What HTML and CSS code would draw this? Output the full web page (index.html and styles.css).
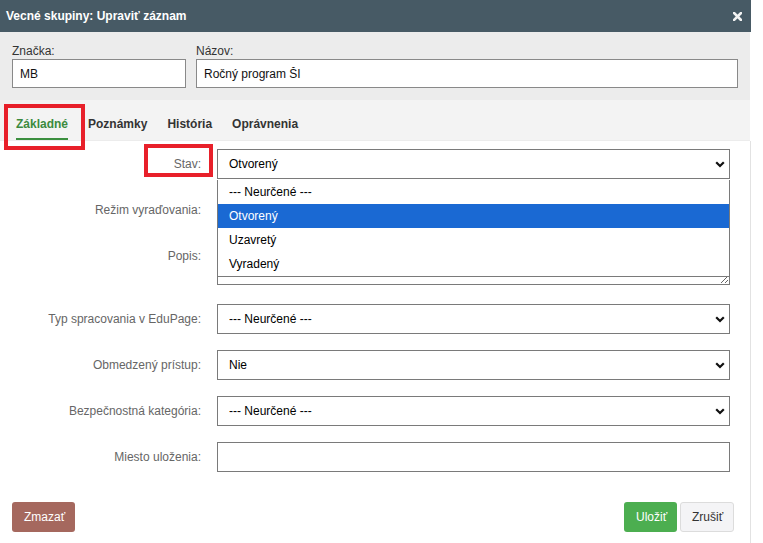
FILE: index.html
```html
<!DOCTYPE html>
<html>

<head>
    <meta charset="utf-8">
    <title>Vecné skupiny: Upraviť záznam</title>
    <link rel="stylesheet" href="styles.css">
</head>

<body>
    <div class="dialog">
        <div class="dialog-header">
            <span class="dialog-title">Vecné skupiny: Upraviť záznam</span>
            <span class="close-btn">
                <svg width="9" height="9" viewBox="0 0 9 9">
                    <path d="M1 1 L8 8 M8 1 L1 8" stroke="#f2f2f2" stroke-width="2.6" stroke-linecap="square" fill="none"/>
                </svg>
            </span>
        </div>

        <div class="head-fields">
            <div class="head-field field-code">
                <label for="code">Značka:</label>
                <input type="text" id="code" value="MB">
            </div>
            <div class="head-field field-name">
                <label for="name">Názov:</label>
                <input type="text" id="name" value="Ročný program ŠI">
            </div>
        </div>

        <div class="tabs">
            <div class="tab active">Základné</div>
            <div class="tab">Poznámky</div>
            <div class="tab">História</div>
            <div class="tab">Oprávnenia</div>
        </div>

        <div class="dialog-body">
            <div class="form-row">
                <label>Stav:</label>
                <div class="select-wrap">
                    <select class="select">
                        <option>Otvorený</option>
                    </select>
                    <svg class="chevron" width="10" height="7" viewBox="0 0 10 7">
                        <path d="M1.2 1.2 L5 5 L8.8 1.2" stroke="#111" stroke-width="2.2" fill="none"/>
                    </svg>
                    <ul class="dropdown">
                        <li>--- Neurčené ---</li>
                        <li class="selected">Otvorený</li>
                        <li>Uzavretý</li>
                        <li>Vyradený</li>
                    </ul>
                </div>
            </div>

            <div class="form-row">
                <label>Režim vyraďovania:</label>
                <div class="select-wrap">
                    <select class="select">
                        <option>--- Neurčené ---</option>
                    </select>
                </div>
            </div>

            <div class="form-row row-text">
                <label>Popis:</label>
                <textarea class="textarea"></textarea>
            </div>

            <div class="form-row">
                <label>Typ spracovania v EduPage:</label>
                <div class="select-wrap">
                    <select class="select">
                        <option>--- Neurčené ---</option>
                    </select>
                    <svg class="chevron" width="10" height="7" viewBox="0 0 10 7">
                        <path d="M1.2 1.2 L5 5 L8.8 1.2" stroke="#111" stroke-width="2.2" fill="none"/>
                    </svg>
                </div>
            </div>

            <div class="form-row">
                <label>Obmedzený prístup:</label>
                <div class="select-wrap">
                    <select class="select">
                        <option>Nie</option>
                    </select>
                    <svg class="chevron" width="10" height="7" viewBox="0 0 10 7">
                        <path d="M1.2 1.2 L5 5 L8.8 1.2" stroke="#111" stroke-width="2.2" fill="none"/>
                    </svg>
                </div>
            </div>

            <div class="form-row">
                <label>Bezpečnostná kategória:</label>
                <div class="select-wrap">
                    <select class="select">
                        <option>--- Neurčené ---</option>
                    </select>
                    <svg class="chevron" width="10" height="7" viewBox="0 0 10 7">
                        <path d="M1.2 1.2 L5 5 L8.8 1.2" stroke="#111" stroke-width="2.2" fill="none"/>
                    </svg>
                </div>
            </div>

            <div class="form-row">
                <label>Miesto uloženia:</label>
                <input type="text" class="text-input">
            </div>

            <div class="buttons">
                <button type="button" class="delete-btn">Zmazať</button>
                <div class="buttons-right">
                    <button type="button" class="save-btn">Uložiť</button>
                    <button type="button" class="cancel-btn">Zrušiť</button>
                </div>
            </div>
        </div>

        <!-- označenia -->
        <div class="mark mark-tab"></div>
        <div class="mark mark-stav"></div>
    </div>
</body>

</html>
```

FILE: styles.css
```css
body {
    margin: 0;
    font-family: "Liberation Sans", Arial, sans-serif;
    font-size: 12px;
    background-color: white;
}

.dialog {
    position: relative;
    width: 751px;
    height: 543px;
    overflow: hidden;
}

.dialog-header {
    height: 32px;
    background-color: #475a65;
    display: flex;
    align-items: center;
    justify-content: space-between;
    padding: 0 9px 0 6px;
}

.dialog-title {
    color: white;
    font-weight: bold;
    font-size: 12px;
}

.close-btn {
    display: flex;
    margin-top: 1px;
}

.head-fields {
    display: flex;
    gap: 10px;
    width: 750px;
    box-sizing: border-box;
    padding: 11px 12px 12px;
    background-color: #ececec;
}

.head-field label {
    display: block;
    line-height: 16px;
    color: #333;
}

.head-field input {
    display: block;
    height: 29px;
    box-sizing: border-box;
    border: 1px solid #898989;
    padding: 0 7px;
    font-family: inherit;
    font-size: 12px;
    color: #111;
}

.field-code input {
    width: 174px;
}

.field-name input {
    width: 542px;
}

.tabs {
    display: flex;
    gap: 20px;
    width: 750px;
    box-sizing: border-box;
    padding-left: 16px;
    background-color: #f3f3f3;
    border-bottom: 1px solid #ececec;
}

.tab {
    padding-top: 16px;
    padding-bottom: 6px;
    line-height: 16px;
    font-weight: bold;
    color: #333;
    border-bottom: 2px solid transparent;
}

.tab.active {
    color: #3b8a3e;
    border-bottom-color: #3b8f3f;
}

.dialog-body {
    width: 751px;
    height: 402px;
    box-sizing: border-box;
    padding: 8px 16px 0 12px;
    border-right: 1px solid #e2e2e2;
}

.form-row {
    display: grid;
    grid-template-columns: 189px 513px;
    column-gap: 16px;
    margin-bottom: 16px;
}

.form-row label {
    line-height: 30px;
    text-align: right;
    color: #666;
}

.row-text {
    margin-bottom: 19px;
}

.select-wrap {
    position: relative;
}

.select {
    display: block;
    width: 513px;
    height: 30px;
    box-sizing: border-box;
    border: 1px solid #7a7a7a;
    border-radius: 0;
    padding: 0 11px;
    background-color: white;
    font-family: inherit;
    font-size: 12px;
    color: #000;
    appearance: none;
    -webkit-appearance: none;
}

.chevron {
    position: absolute;
    right: 5px;
    top: 12px;
}

.dropdown {
    position: absolute;
    top: 31px;
    left: 0;
    width: 513px;
    box-sizing: border-box;
    margin: 0;
    padding: 0;
    list-style: none;
    background-color: white;
    border: 1px solid #7a7a7a;
    border-top: none;
    z-index: 5;
}

.dropdown li {
    height: 24px;
    line-height: 24px;
    padding-left: 11px;
    color: #000;
}

.dropdown li.selected {
    background-color: #1a69d3;
    color: white;
}

.textarea {
    display: block;
    width: 513px;
    height: 44px;
    box-sizing: border-box;
    border: 1px solid #7a7a7a;
    margin: 0;
    font-family: inherit;
    font-size: 12px;
}

.text-input {
    display: block;
    width: 513px;
    height: 30px;
    box-sizing: border-box;
    border: 1px solid #7a7a7a;
    padding: 0 11px;
    font-family: inherit;
}

.buttons {
    display: flex;
    justify-content: space-between;
    margin-top: 30px;
}

.buttons-right {
    display: flex;
    gap: 3px;
}

button {
    height: 30px;
    padding: 0 11px;
    border: 1px solid transparent;
    border-radius: 3px;
    font-family: inherit;
    font-size: 12px;
    cursor: pointer;
}

.delete-btn {
    width: 63px;
    background-color: #a5685e;
    color: white;
}

.save-btn {
    width: 53px;
    background-color: #4cae50;
    color: white;
}

.cancel-btn {
    width: 54px;
    background-color: #f4f4f6;
    border-color: #dcdcdc;
    color: #333;
}

.mark {
    position: absolute;
    border: 4px solid #e8202a;
    box-sizing: border-box;
}

.mark-tab {
    left: 4px;
    top: 104px;
    width: 81px;
    height: 46px;
}

.mark-stav {
    left: 144px;
    top: 144px;
    width: 69px;
    height: 33px;
}
```
